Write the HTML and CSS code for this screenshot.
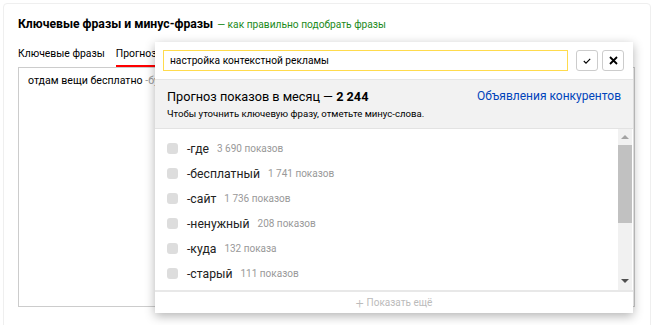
FILE: index.html
```html
<!DOCTYPE html>
<html lang="ru">
<head>
    <meta charset="UTF-8">
    <title>Ключевые фразы</title>
    <link rel="stylesheet" href="styles.css">
</head>
<body>
    <div class="card">
        <div class="head">
            <span class="title">Ключевые фразы и минус-фразы</span>
            <a href="javascript:;" class="help">— как правильно подобрать фразы</a>
        </div>
        <div class="tabs">
            <span class="tab">Ключевые фразы</span>
            <span class="tab active">Прогноз</span>
        </div>
        <div class="area">отдам вещи бесплатно <span class="minus">-бу</span></div>

        <div class="popup">
            <div class="search">
                <div class="input">настройка контекстной рекламы</div>
                <a href="javascript:;" class="btn">
                    <svg width="8" height="6" viewBox="0 0 8 6"><path d="M0.8 3 L3 5.2 L7.2 0.8" fill="none" stroke="#000" stroke-width="1.1"/></svg>
                </a>
                <a href="javascript:;" class="btn">
                    <svg width="9" height="9" viewBox="0 0 9 9"><path d="M1 1 L8 8 M8 1 L1 8" fill="none" stroke="#000" stroke-width="1.8"/></svg>
                </a>
            </div>
            <div class="summary">
                <div class="sum-row">
                    <span class="sum-title">Прогноз показов в месяц — <b>2 244</b></span>
                    <a href="javascript:;" class="rivals">Объявления конкурентов</a>
                </div>
                <div class="hint">Чтобы уточнить ключевую фразу, отметьте минус-слова.</div>
            </div>
            <div class="listbox">
                <ul class="words">
                    <li><i class="check"></i><span class="word">-где</span><span class="count">3 690 показов</span></li>
                    <li><i class="check"></i><span class="word">-бесплатный</span><span class="count">1 741 показов</span></li>
                    <li><i class="check"></i><span class="word">-сайт</span><span class="count">1 736 показов</span></li>
                    <li><i class="check"></i><span class="word">-ненужный</span><span class="count">208 показов</span></li>
                    <li><i class="check"></i><span class="word">-куда</span><span class="count">132 показа</span></li>
                    <li><i class="check"></i><span class="word">-старый</span><span class="count">111 показов</span></li>
                </ul>
                <div class="scroll">
                    <span class="arr up"></span>
                    <span class="thumb"></span>
                    <span class="arr down"></span>
                </div>
            </div>
            <div class="more"><span class="plus">+</span> Показать ещё</div>
        </div>
    </div>
</body>
</html>
```

FILE: styles.css
```css
*{
    margin: 0;
    padding: 0;
    list-style: none;
    text-decoration: none;
    box-sizing: border-box;
}
body{
    background: #fff;
    font-family: Roboto, "Noto Sans", Arial, sans-serif;
    color: #000;
}
.card{
    position: relative;
    margin: 3px;
    width: 648px;
    height: 340px;
    border: 1px solid #efefef;
    border-radius: 4px;
    padding: 12px 14px 0 14px;
}
.head{
    height: 16px;
    line-height: 16px;
    display: flex;
    align-items: baseline;
    gap: 4px;
}
.title{
    font-size: 12.2px;
    font-weight: bold;
}
.help{
    font-size: 10.2px;
    color: #1b8a1b;
}
.tabs{
    margin-top: 13px;
    display: flex;
    gap: 11px;
    font-size: 10.4px;
}
.tab{
    line-height: 18px;
    padding-bottom: 2px;
    border-bottom: 2px solid transparent;
}
.tab.active{
    border-bottom-color: #f00;
}
.area{
    height: 240px;
    width: 617px;
    border: 1px solid #ccc;
    padding: 6px 9px;
    font-size: 10.6px;
}
.minus{
    color: #999;
}

/* выпадающий прогноз */
.popup{
    position: absolute;
    left: 151px;
    top: 38px;
    width: 478px;
    height: 271px;
    background: #fff;
    box-shadow: 0 3px 10px rgba(0,0,0,.3);
    display: flex;
    flex-direction: column;
}
.search{
    display: flex;
    align-items: center;
    padding: 8px 9px 8px 8px;
    height: 37px;
}
.input{
    width: 405px;
    height: 21px;
    border: 1px solid #ffdb4d;
    font-size: 10.2px;
    line-height: 19px;
    padding-left: 6px;
}
.btn{
    width: 22px;
    height: 21px;
    border: 1px solid #ccc;
    border-radius: 3px;
    display: flex;
    align-items: center;
    justify-content: center;
    margin-left: 8px;
}
.btn + .btn{
    margin-left: 4px;
}
.summary{
    background: #f2f2f2;
    border-top: 1px solid #e6e6e6;
    border-bottom: 1px solid #e3e3e3;
    height: 50px;
    padding: 8px 12px 0 12px;
}
.sum-row{
    display: flex;
    justify-content: space-between;
    line-height: 17px;
}
.sum-title{
    font-size: 12.7px;
}
.rivals{
    font-size: 12px;
    color: #0044bb;
}
.hint{
    font-size: 9.6px;
    margin-top: 3px;
}
.listbox{
    flex: 1;
    display: flex;
}
.words{
    flex: 1;
    padding: 7px 0 0 12px;
}
.words li{
    height: 25px;
    display: flex;
    align-items: center;
}
.check{
    width: 11px;
    height: 11px;
    background: #ddd;
    border-radius: 3px;
    margin-right: 9px;
}
.word{
    font-size: 12.2px;
    color: #222;
    margin-right: 8px;
}
.count{
    font-size: 10px;
    color: #999;
}
.scroll{
    width: 14px;
    margin-right: 1px;
    background: #f1f1f1;
    display: flex;
    flex-direction: column;
    align-items: center;
}
.arr{
    width: 0;
    height: 0;
    border-left: 4px solid transparent;
    border-right: 4px solid transparent;
}
.arr.up{
    border-bottom: 4px solid #a3a3a3;
    margin-top: 6px;
}
.arr.down{
    border-top: 4px solid #505050;
    margin-top: auto;
    margin-bottom: 7px;
}
.thumb{
    width: 14px;
    height: 78px;
    background: #c1c1c1;
    margin-top: 6px;
}
.more{
    height: 23px;
    border-top: 2px solid #e8e8e8;
    font-size: 10px;
    color: #bbb;
    display: flex;
    align-items: center;
    justify-content: center;
    gap: 3px;
}
.plus{
    font-size: 14px;
    font-weight: 300;
}
```
